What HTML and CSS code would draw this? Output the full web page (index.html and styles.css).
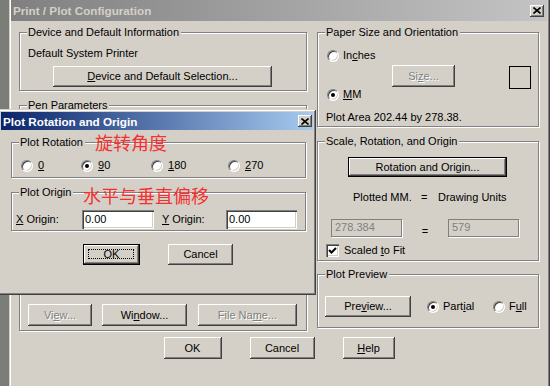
FILE: index.html
```html
<!DOCTYPE html>
<html lang="en">
<head>
  <meta charset="UTF-8">
  <meta name="viewport" content="width=device-width, initial-scale=1.0">
  <title>Print / Plot Configuration</title>
  <link rel="stylesheet" href="styles.css">
</head>
<body>
  <div class="desktop">
    <div class="window main-window">
      <div class="titlebar titlebar-inactive">
        <span class="title">Print / Plot Configuration</span>
        <span class="title-close"><svg width="8" height="7" viewBox="0 0 8 7"><path d="M0.5 0.5 L7.5 6.5 M7.5 0.5 L0.5 6.5" stroke="#000" stroke-width="1.6"/></svg></span>
      </div>
      <div class="main-body">
        <div class="columns">
          <div class="col">
            <div class="group group-device">
              <span class="legend">Device and Default Information</span>
              <div class="line">Default System Printer</div>
              <button class="btn btn-device"><u>D</u>evice and Default Selection...</button>
            </div>
            <div class="group group-pen">
              <span class="legend">Pen Parameters</span>
            </div>
            <div class="group group-area">
              <span class="legend">Additional Parameters</span>
              <div class="area-buttons">
                <button class="btn disabled btn-view">Vi<u>e</u>w...</button>
                <button class="btn btn-window">Wi<u>n</u>dow...</button>
                <button class="btn disabled btn-file">File Na<u>m</u>e...</button>
              </div>
            </div>
          </div>
          <div class="col">
            <div class="group group-paper">
              <span class="legend">Paper Size and Orientation</span>
              <div class="paper-row">
                <div class="paper-units">
                  <div class="option"><span class="radio"></span><span>In<u>c</u>hes</span></div>
                  <div class="option"><span class="radio checked"></span><span><u>M</u>M</span></div>
                </div>
                <button class="btn disabled btn-size">Si<u>z</u>e...</button>
                <div class="paper-icon"></div>
              </div>
              <div class="line plot-area">Plot Area 202.44 by 278.38.</div>
            </div>
            <div class="group group-scale">
              <span class="legend">Scale, Rotation, and Origin</span>
              <button class="btn btn-default btn-rotation">Rotation and Origin...</button>
              <div class="scale-labels">
                <span class="scale-plotted">Plotted MM.</span>
                <span class="scale-eq">=</span>
                <span>Drawing Units</span>
              </div>
              <div class="scale-inputs">
                <div class="field field-disabled">278.384</div>
                <span class="scale-eq-low">=</span>
                <div class="field field-disabled">579</div>
              </div>
              <div class="option check-row">
                <span class="checkbox"><svg width="9" height="9" viewBox="0 0 9 9"><path d="M1 4 L3.5 6.5 L8 2" fill="none" stroke="#000" stroke-width="2"/></svg></span><span>Scaled <u>t</u>o Fit</span>
              </div>
            </div>
            <div class="group group-preview">
              <span class="legend">Plot Preview</span>
              <div class="preview-row">
                <button class="btn btn-preview">Pre<u>v</u>iew...</button>
                <div class="option option-partial"><span class="radio checked"></span><span>Part<u>i</u>al</span></div>
                <div class="option"><span class="radio"></span><span>F<u>u</u>ll</span></div>
              </div>
            </div>
          </div>
        </div>
        <div class="bottom-buttons">
          <button class="btn btn-ok">OK</button>
          <button class="btn btn-cancel">Cancel</button>
          <button class="btn btn-help"><u>H</u>elp</button>
        </div>
      </div>
    </div>

    <div class="window dialog">
      <div class="titlebar titlebar-active">
        <span class="title">Plot Rotation and Origin</span>
        <span class="title-close"><svg width="8" height="7" viewBox="0 0 8 7"><path d="M0.5 0.5 L7.5 6.5 M7.5 0.5 L0.5 6.5" stroke="#000" stroke-width="1.6"/></svg></span>
      </div>
      <div class="dialog-body">
        <div class="group group-rotation">
          <span class="legend">Plot Rotation</span>
          <div class="rotation-row">
            <div class="option rot-0"><span class="radio"></span><span><u>0</u></span></div>
            <div class="option rot-90"><span class="radio checked"></span><span><u>9</u>0</span></div>
            <div class="option rot-180"><span class="radio"></span><span><u>1</u>80</span></div>
            <div class="option"><span class="radio"></span><span><u>2</u>70</span></div>
          </div>
        </div>
        <div class="group group-origin">
          <span class="legend">Plot Origin</span>
          <div class="origin-row">
            <span class="origin-label"><u>X</u> Origin:</span>
            <div class="field field-x">0.00</div>
            <span class="origin-label origin-label-y"><u>Y</u> Origin:</span>
            <div class="field field-y">0.00</div>
          </div>
        </div>
        <div class="dialog-buttons">
          <button class="btn btn-default btn-dlg-ok"><span class="focus"></span>OK</button>
          <button class="btn btn-dlg-cancel">Cancel</button>
        </div>
      </div>
      <span class="note note-rotation">旋转角度</span>
      <span class="note note-origin">水平与垂直偏移</span>
    </div>
  </div>
</body>
</html>
```

FILE: styles.css
```css
* {
  box-sizing: border-box;
}

body {
  margin: 0;
  font-family: "Liberation Sans", Arial, sans-serif;
  font-size: 11px;
  line-height: 13px;
  color: #000;
}

u {
  text-decoration: underline;
  text-underline-offset: 1px;
}

.desktop {
  position: relative;
  width: 550px;
  height: 386px;
  overflow: hidden;
  background: #7b7d78;
}

/* windows */
.window {
  position: absolute;
  background: #d4d0c8;
  box-shadow: inset 1px 1px #d4d0c8, inset -1px -1px #404040, inset 2px 2px #fff, inset -2px -2px #808080;
}

.main-window {
  left: 9px;
  top: -3px;
  width: 541px;
  height: 400px;
  padding: 3px 3px 0 2px;
}

.dialog {
  left: -2px;
  top: 109px;
  width: 318px;
  height: 186px;
  padding: 3px;
}

.titlebar {
  display: flex;
  align-items: center;
  justify-content: space-between;
  height: 21px;
  padding: 0 3px 0 2px;
  font-size: 11.7px;
  font-weight: bold;
  white-space: nowrap;
}

.titlebar-inactive {
  background: linear-gradient(to right, #808080, #c4c4c4);
  color: #d4d0c8;
}

.titlebar-active {
  height: 18px;
  padding: 0 1px 0 2px;
  background: linear-gradient(to right, #0a246a, #a6caf0);
  color: #fff;
}

.title-close {
  display: flex;
  align-items: center;
  justify-content: center;
  width: 14px;
  height: 12px;
  background: #d4d0c8;
  box-shadow: inset -1px -1px #404040, inset 1px 1px #fff, inset -2px -2px #808080;
}

/* groups */
.group {
  position: relative;
  border: 1px solid #808080;
  box-shadow: inset 1px 1px #fff, 1px 1px #fff;
}

.legend {
  position: absolute;
  left: 7px;
  top: -7px;
  padding: 0 2px 0 1px;
  background: #d4d0c8;
  white-space: nowrap;
}

.line {
  white-space: nowrap;
}

/* controls */
.btn {
  display: block;
  height: 21px;
  padding: 0;
  border: 0;
  background: #d4d0c8;
  font: inherit;
  color: #000;
  white-space: nowrap;
  box-shadow: inset -1px -1px #404040, inset 1px 1px #fff, inset -2px -2px #808080, inset 2px 2px #d4d0c8;
}

.btn.disabled {
  color: #808080;
  text-shadow: 1px 1px #fff;
}

.btn-default {
  position: relative;
  border: 1px solid #000;
}

.focus {
  position: absolute;
  left: 4px;
  top: 4px;
  right: 5px;
  bottom: 5px;
  border: 1px dotted #000;
}

.option {
  display: flex;
  align-items: center;
  gap: 4px;
  height: 13px;
  white-space: nowrap;
}

.radio {
  position: relative;
  flex: none;
  width: 12px;
  height: 12px;
  border-radius: 50%;
  background: #fff;
  border: 1px solid;
  border-color: #808080 #fff #fff #808080;
  box-shadow: inset 1px 1px #404040, inset -1px -1px #d4d0c8;
}

.radio.checked::after {
  content: "";
  position: absolute;
  left: 3px;
  top: 3px;
  width: 4px;
  height: 4px;
  border-radius: 50%;
  background: #000;
}

.checkbox {
  display: flex;
  align-items: center;
  justify-content: center;
  flex: none;
  width: 13px;
  height: 13px;
  background: #fff;
  box-shadow: inset 1px 1px #808080, inset 2px 2px #404040, inset -1px -1px #fff, inset -2px -2px #d4d0c8;
}

.field {
  height: 19px;
  padding: 3px 0 0 3px;
  background: #fff;
  box-shadow: inset 1px 1px #808080, inset 2px 2px #404040, inset -1px -1px #fff, inset -2px -2px #d4d0c8;
}

.field-disabled {
  height: 18px;
  padding: 2px 0 0 4px;
  background: #d4d0c8;
  color: #808080;
  box-shadow: inset 0 0 0 1px #808080, 1px 1px #fff;
}

/* main window layout */
.main-body {
  padding: 11px 8px 0 8px;
}

.columns {
  display: grid;
  grid-template-columns: 288px 222px;
  column-gap: 10px;
  align-items: start;
}

.group-device {
  height: 59px;
  padding: 14px 0 0 8px;
}

.btn-device {
  width: 219px;
  margin: 6px 0 0 25px;
}

.group-pen {
  height: 70px;
  margin-top: 14px;
}

.group-area {
  display: flex;
  flex-direction: column;
  justify-content: flex-end;
  height: 146px;
  margin-top: 10px;
  padding: 0 0 4px 8px;
}

.area-buttons {
  display: flex;
}

.area-buttons .btn {
  height: 22px;
}

.btn-view {
  width: 64px;
}

.btn-window {
  width: 85px;
  margin-left: 10px;
}

.btn-file {
  width: 99px;
  margin-left: 11px;
}

.group-paper {
  height: 95px;
  padding: 16px 0 0 9px;
}

.paper-row {
  display: flex;
}

.paper-units {
  display: flex;
  flex-direction: column;
  justify-content: space-between;
  width: 65px;
  height: 52px;
}

.btn-size {
  width: 63px;
  height: 22px;
  margin-top: 16px;
}

.paper-icon {
  width: 22px;
  height: 23px;
  margin: 17px 0 0 54px;
  border: 1px solid #000;
}

.plot-area {
  margin: 10px 0 0 -1px;
}

.group-scale {
  height: 120px;
  margin-top: 14px;
  padding: 15px 0 0 9px;
}

.btn-rotation {
  width: 159px;
  height: 20px;
  margin-left: 21px;
}

.scale-labels {
  display: flex;
  margin: 14px 0 0 26px;
}

.scale-plotted {
  width: 68px;
}

.scale-eq {
  width: 17px;
}

.scale-inputs {
  display: flex;
  margin: 15px 0 0 4px;
}

.scale-inputs .field {
  width: 71px;
}

.scale-eq-low {
  width: 46px;
  padding-top: 6px;
  text-align: center;
}

.check-row {
  gap: 5px;
  margin: 6px 0 0 -1px;
}

.group-preview {
  height: 54px;
  margin-top: 13px;
  padding: 21px 0 0 7px;
}

.preview-row {
  display: flex;
  align-items: center;
}

.btn-preview {
  width: 86px;
}

.option-partial {
  width: 66px;
  margin-left: 16px;
}

.bottom-buttons {
  display: flex;
  justify-content: center;
  gap: 28px;
  margin-top: 6px;
}

.bottom-buttons .btn {
  height: 22px;
}

.btn-ok {
  width: 58px;
}

.btn-cancel {
  width: 65px;
}

.btn-help {
  width: 52px;
}

/* dialog layout */
.dialog-body {
  padding: 12px 0 0 10px;
}

.dialog .group {
  width: 295px;
}

.group-rotation {
  height: 36px;
  padding: 16px 0 0 9px;
}

.rotation-row {
  display: flex;
}

.rotation-row .option {
  gap: 5px;
}

.rot-0 {
  width: 60px;
}

.rot-90 {
  width: 70px;
}

.rot-180 {
  width: 77px;
}

.group-origin {
  height: 39px;
  margin-top: 14px;
  padding: 17px 0 0 4px;
}

.origin-row {
  display: flex;
  align-items: center;
}

.origin-label {
  width: 66px;
  white-space: nowrap;
}

.origin-label-y {
  width: 64px;
  margin-left: 8px;
}

.field-x {
  width: 72px;
}

.field-y {
  width: 71px;
}

.dialog-buttons {
  display: flex;
  margin-top: 13px;
  padding-left: 72px;
}

.btn-dlg-ok {
  width: 57px;
}

.btn-dlg-cancel {
  width: 65px;
  margin-left: 28px;
}

/* red annotations drawn over the dialog */
.note {
  position: absolute;
  color: #f43030;
  font-family: "Noto Sans CJK SC", sans-serif;
  font-size: 18px;
  line-height: 18px;
  white-space: nowrap;
}

.note-rotation {
  left: 97px;
  top: 24px;
}

.note-origin {
  left: 85px;
  top: 77px;
}
```
